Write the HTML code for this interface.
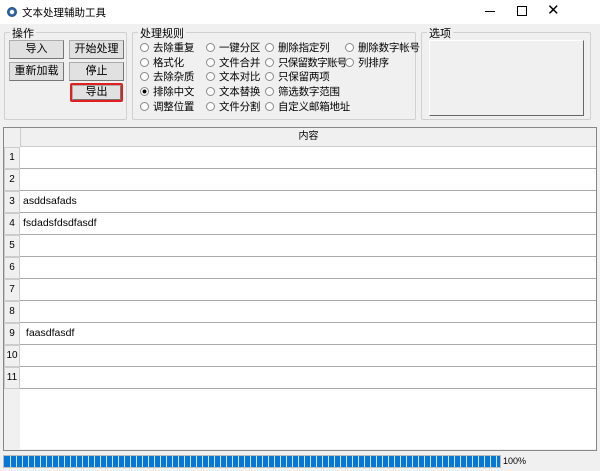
<!DOCTYPE html>
<html><head><meta charset="utf-8"><style>
*{margin:0;padding:0;box-sizing:border-box}
body{width:600px;height:471px;background:#f0f0f0;font-family:"Liberation Sans","Noto Sans CJK SC",sans-serif;font-size:11px;color:#000;position:relative;overflow:hidden}
.a{position:absolute}
.title{left:0;top:0;width:600px;height:24px;background:#fff}
fieldset{position:absolute;border:1px solid #d0d0d0;border-radius:2px}
.lg{position:absolute;background:#f0f0f0;padding:0 2px;font-size:11px;top:-8px;left:5px}
.btn{position:absolute;background:#e1e1e1;border:1px solid #adadad;border-right-color:#777;border-bottom-color:#777;text-align:center;line-height:17px;font-size:11px}
.r{position:absolute;font-size:10.5px;white-space:nowrap;letter-spacing:-0.2px}
.r:before{content:"";display:inline-block;width:7px;height:7px;border:1px solid #888;border-radius:50%;margin-right:4px;vertical-align:-1px;background:#fff}
.r.on:before{background:radial-gradient(#000 35%,#fff 45%)}
.grid{left:3px;top:127px;width:594px;height:324px;border:1px solid #888;background:#f0f0f0}
.row{position:absolute;left:0;width:592px;height:22px}
.num{position:absolute;left:0;top:0;width:16px;height:22px;border:1px solid #ccc;background:#f0f0f0;text-align:center;line-height:20px;font-size:10px}
.cell{position:absolute;left:16px;top:0;width:576px;height:22px;background:#fff;border-bottom:1px solid #aaa;line-height:21px;padding-left:3px;font-size:10.5px}
</style></head><body>
<div class="a title">
<div class="a" style="left:7px;top:7px;width:10px;height:10px;border-radius:50%;background:radial-gradient(#fff 25%,#3a6fb0 35%,#1b3f77 80%)"></div>
<div class="a" style="left:22px;top:5px;font-size:10.5px">文本处理辅助工具</div>
<div class="a" style="left:485px;top:11px;width:10px;height:1px;background:#000"></div>
<div class="a" style="left:517px;top:6px;width:10px;height:10px;border:1px solid #000"></div>
<div class="a" style="left:547px;top:1px;font-size:15px">✕</div>
</div>
<fieldset style="left:4px;top:32px;width:123px;height:88px"><span class="lg">操作</span></fieldset>
<div class="btn" style="left:9px;top:40px;width:55px;height:19px">导入</div>
<div class="btn" style="left:69px;top:40px;width:55px;height:19px">开始处理</div>
<div class="btn" style="left:9px;top:62px;width:55px;height:19px">重新加载</div>
<div class="btn" style="left:69px;top:62px;width:55px;height:19px">停止</div>
<div class="a" style="left:70px;top:83px;width:53px;height:19px;border:2px solid #e02020;border-radius:2px"></div>
<div class="btn" style="left:72px;top:85px;width:49px;height:15px;line-height:13px">导出</div>
<fieldset style="left:132px;top:32px;width:284px;height:88px"><span class="lg">处理规则</span></fieldset>
<div class="r" style="left:140px;top:40px">去除重复</div>
<div class="r" style="left:140px;top:55px">格式化</div>
<div class="r" style="left:140px;top:69px">去除杂质</div>
<div class="r on" style="left:140px;top:84px">排除中文</div>
<div class="r" style="left:140px;top:99px">调整位置</div>
<div class="r" style="left:206px;top:40px">一键分区</div>
<div class="r" style="left:206px;top:55px">文件合并</div>
<div class="r" style="left:206px;top:69px">文本对比</div>
<div class="r" style="left:206px;top:84px">文本替换</div>
<div class="r" style="left:206px;top:99px">文件分割</div>
<div class="r" style="left:265px;top:40px">删除指定列</div>
<div class="r" style="left:265px;top:55px;letter-spacing:-0.7px">只保留数字账号</div>
<div class="r" style="left:265px;top:69px">只保留两项</div>
<div class="r" style="left:265px;top:84px">筛选数字范围</div>
<div class="r" style="left:265px;top:99px">自定义邮箱地址</div>
<div class="r" style="left:345px;top:40px">删除数字帐号</div>
<div class="r" style="left:345px;top:55px">列排序</div>
<fieldset style="left:421px;top:32px;width:170px;height:88px"><span class="lg">选项</span></fieldset>
<div class="a" style="left:429px;top:40px;width:155px;height:76px;border:1px solid #fff;border-right-color:#666;border-bottom-color:#666;background:#f0f0f0"></div>
<div class="a grid">
<div class="a" style="left:16px;top:0;width:576px;height:19px;border-left:1px solid #ccc;border-bottom:1px solid #ccc;text-align:center;line-height:18px;font-size:10px">内容</div>
<div class="row" style="top:19px"><div class="num">1</div><div class="cell"></div></div>
<div class="row" style="top:41px"><div class="num">2</div><div class="cell"></div></div>
<div class="row" style="top:63px"><div class="num">3</div><div class="cell">asddsafads</div></div>
<div class="row" style="top:85px"><div class="num">4</div><div class="cell">fsdadsfdsdfasdf</div></div>
<div class="row" style="top:107px"><div class="num">5</div><div class="cell"></div></div>
<div class="row" style="top:129px"><div class="num">6</div><div class="cell"></div></div>
<div class="row" style="top:151px"><div class="num">7</div><div class="cell"></div></div>
<div class="row" style="top:173px"><div class="num">8</div><div class="cell"></div></div>
<div class="row" style="top:195px"><div class="num">9</div><div class="cell">&nbsp;faasdfasdf</div></div>
<div class="row" style="top:217px"><div class="num">10</div><div class="cell"></div></div>
<div class="row" style="top:239px"><div class="num">11</div><div class="cell"></div></div>
<div class="a" style="left:16px;top:261px;width:576px;height:60px;background:#fff"></div>
</div>
<div class="a" style="left:3px;top:455px;width:498px;height:13px;border:1px solid #bcbcbc;background:repeating-linear-gradient(90deg,#0677d6 0,#0677d6 5px,#cfe6f8 5px,#cfe6f8 6px);background-origin:content-box;padding:1px"></div>
<div class="a" style="left:503px;top:456px;font-size:9px">100%</div>
</body></html>
